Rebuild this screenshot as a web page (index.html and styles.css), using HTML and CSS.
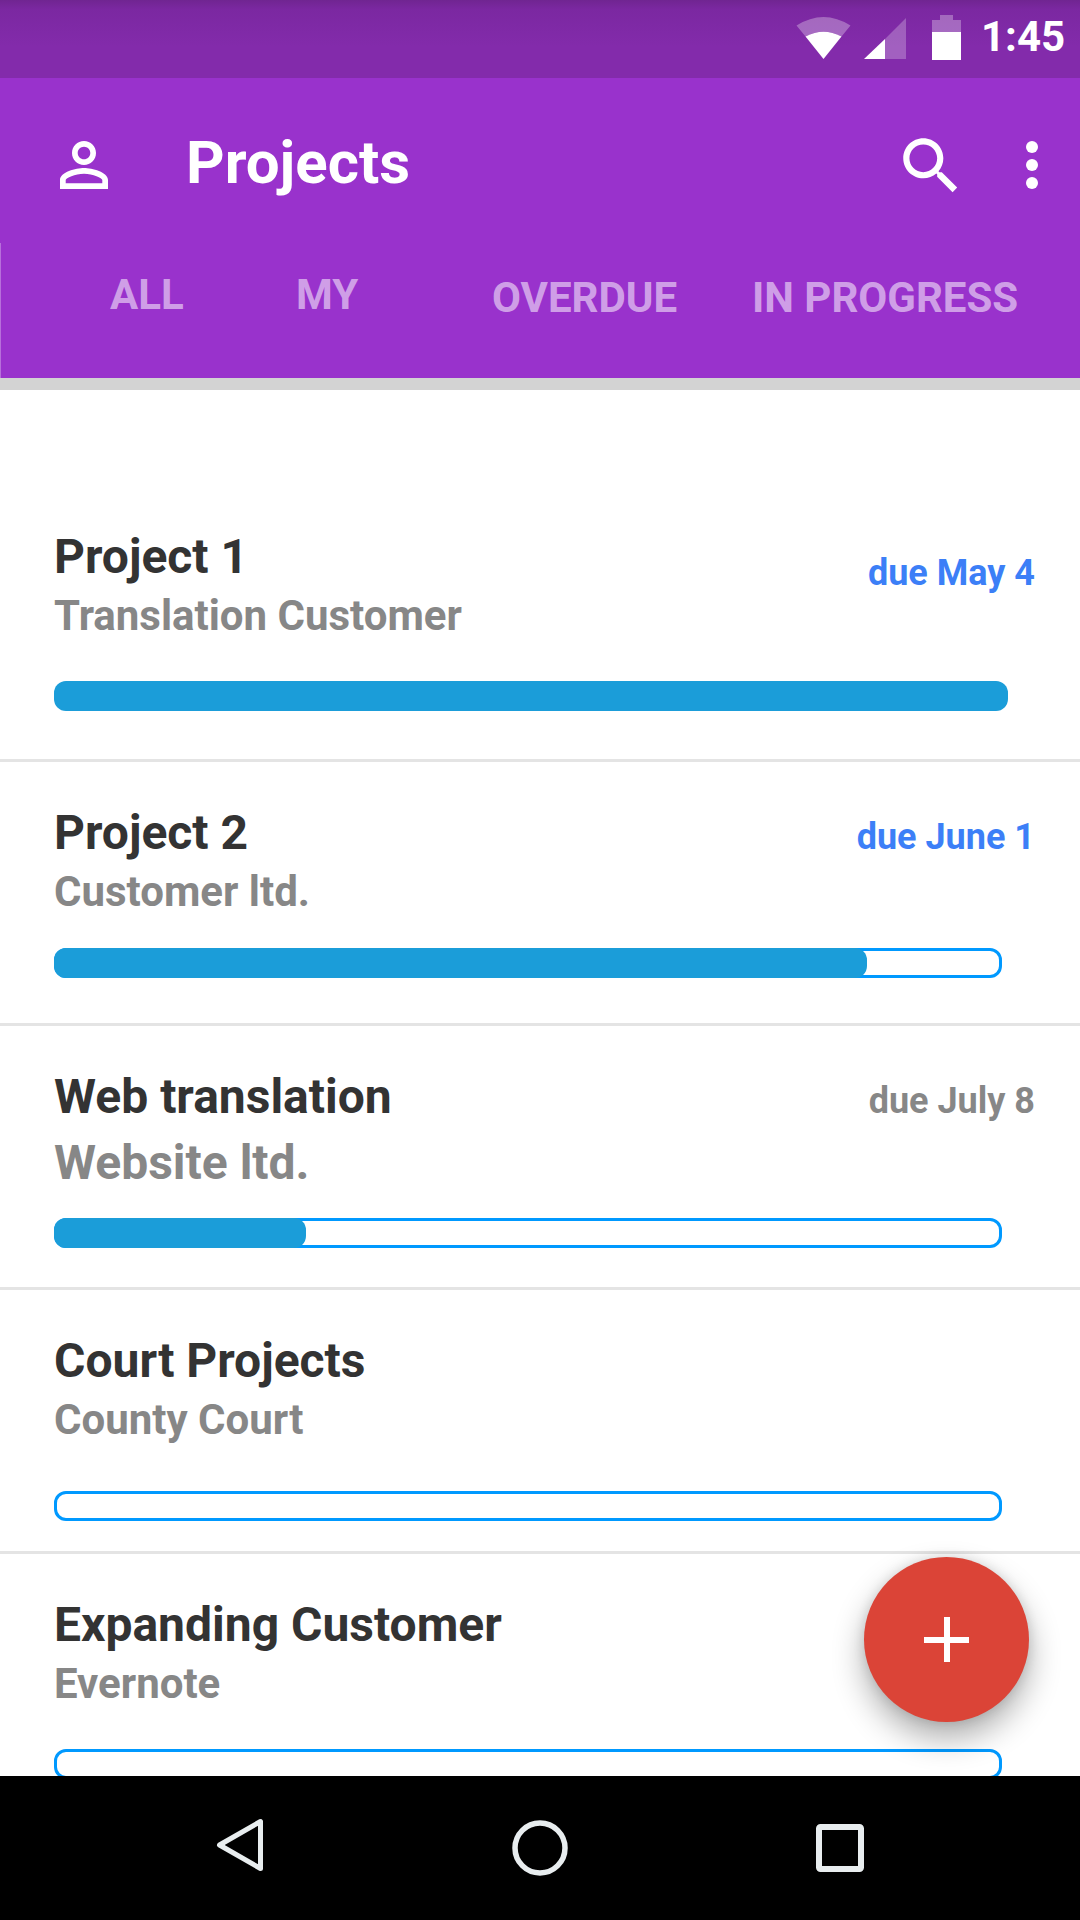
FILE: index.html
```html
<!DOCTYPE html>
<html lang="en">
<head>
<meta charset="utf-8">
<title>Projects</title>
<link rel="stylesheet" href="styles.css">
</head>
<body>
<div class="screen">
  <header class="header">
    <div class="status-bar">
      <svg class="status-icons" viewBox="0 0 180 78" width="180" height="78" fill="#fff">
        <path opacity=".3" d="M10.500 25.500Q37.500 8.500 64.500 25.500L55.500 36.500Q37.500 27 19.500 36.500Z"/>
        <path d="M19.500 36.500Q37.500 27 55.500 36.500L37.500 59Z"/>
        <path opacity=".25" d="M99 39 120 18V59H99Z"/>
        <path d="M78 59 99 39V59Z"/>
        <path opacity=".3" d="M154 15h13v5h8v12h-29V20h8z"/>
        <path d="M146 32h29v28h-29z"/>
      </svg>
      <span class="clock">1:45</span>
    </div>
    <div class="app-bar">
      <svg class="icon" viewBox="0 0 24 24"><path d="M12 5.900c1.160 0 2.100.940 2.100 2.100s-.940 2.100-2.100 2.100S9.900 9.160 9.900 8s.940-2.100 2.100-2.100m0 9c2.970 0 6.100 1.460 6.100 2.100v1.100H5.900V17c0-.640 3.130-2.100 6.100-2.100M12 4C9.790 4 8 5.790 8 8s1.790 4 4 4 4-1.790 4-4-1.790-4-4-4zm0 9c-2.670 0-8 1.340-8 4v3h16v-3c0-2.660-5.330-4-8-4z"/></svg>
      <h1 class="page-title">Projects</h1>
      <svg class="icon icon-search" viewBox="0 0 24 24"><path d="M15.500 14h-.790l-.280-.270C15.410 12.590 16 11.110 16 9.500 16 5.910 13.090 3 9.500 3S3 5.910 3 9.500 5.910 16 9.500 16c1.610 0 3.090-.590 4.230-1.570l.270.280v.790l5 4.990L20.490 19l-4.990-5zm-6 0C7.010 14 5 11.990 5 9.500S7.010 5 9.500 5 14 7.010 14 9.500 11.990 14 9.500 14z"/></svg>
      <svg class="icon icon-more" viewBox="0 0 24 24"><circle cx="12" cy="6" r="2"/><circle cx="12" cy="12" r="2"/><circle cx="12" cy="18" r="2"/></svg>
    </div>
    <nav class="tabs">
      <span class="tab tab-all">ALL</span>
      <span class="tab tab-my">MY</span>
      <span class="tab tab-overdue">OVERDUE</span>
      <span class="tab tab-progress">IN PROGRESS</span>
    </nav>
  </header>

  <main class="list">
    <article class="project project-first">
      <div class="row">
        <div class="names"><h2 class="title">Project 1</h2><p class="client">Translation Customer</p></div>
        <span class="due due-may">due May 4</span>
      </div>
      <div class="progress full"></div>
    </article>
    <article class="project project-second">
      <div class="row">
        <div class="names"><h2 class="title">Project 2</h2><p class="client">Customer ltd.</p></div>
        <span class="due due-june">due June 1</span>
      </div>
      <div class="progress"><div class="fill" style="width:813px"></div></div>
    </article>
    <article class="project project-web">
      <div class="row">
        <div class="names"><h2 class="title">Web translation</h2><p class="client client-large">Website ltd.</p></div>
        <span class="due due-later">due July 8</span>
      </div>
      <div class="progress"><div class="fill" style="width:252px"></div></div>
    </article>
    <article class="project project-court">
      <div class="row">
        <div class="names"><h2 class="title">Court Projects</h2><p class="client">County Court</p></div>
      </div>
      <div class="progress"></div>
    </article>
    <article class="project project-last">
      <div class="row">
        <div class="names"><h2 class="title">Expanding Customer</h2><p class="client">Evernote</p></div>
      </div>
      <div class="progress"></div>
    </article>
    <button class="fab" aria-label="Add project">
      <svg viewBox="0 0 45 45" width="45" height="45"><path fill="#fff" d="M20 0h6v20h19v6H26v19h-6V26H0v-6h20z"/></svg>
    </button>
  </main>

  <footer class="nav-bar">
    <svg viewBox="0 0 1080 144" width="1080" height="144" fill="none" stroke="#e8edef" stroke-width="5" stroke-linejoin="round">
      <path d="M260.500 45.500v47L219.500 69z"/>
      <circle cx="540" cy="72" r="25" stroke-width="5.500"/>
      <rect x="819" y="51" width="42" height="42" rx="1.500" stroke-width="6"/>
    </svg>
  </footer>
</div>
</body>
</html>
```
FILE: styles.css
```css
* { box-sizing: border-box; }

body {
  margin: 0;
  font-family: Roboto, "Liberation Sans", sans-serif;
  font-weight: 700;
  color: #333;
}

h1, h2, p { margin: 0; font-weight: inherit; }

.screen {
  display: flex;
  flex-direction: column;
  width: 1080px;
  height: 1920px;
  overflow: hidden;
  background: #fff;
}

.header {
  height: 390px;
  flex: none;
  background: #9932cc;
  color: #fff;
}

.status-bar {
  display: flex;
  justify-content: flex-end;
  height: 78px;
  background: linear-gradient(#702591, #7b28a1 12%, #832bab 60%, #832bab);
}

.status-icons { flex: none; }

.clock {
  width: 114px;
  padding: 12px 0 0 15px;
  font-size: 42px;
  line-height: 50px;
  white-space: nowrap;
}

.app-bar {
  display: flex;
  align-items: center;
  height: 165px;
  padding: 9px 12px 0 48px;
}

.icon { width: 72px; height: 72px; fill: #fff; flex: none; }
.page-title { flex: 1; margin: 0 0 4px 66px; font-size: 60px; line-height: 70px; }
.icon-search { width: 74px; height: 74px; margin: 2px 28px 0 0; }

.tabs {
  display: flex;
  height: 147px;
  padding: 27px 0 0 110px;
  border-bottom: 12px solid #d3d3d3;
  box-shadow: inset 1px 0 rgba(255, 255, 255, .3);
  font-size: 42px;
  line-height: 50px;
  white-space: nowrap;
}

.tab { color: rgba(255, 255, 255, .55); }
.tab-all { width: 186px; }
.tab-my { width: 196px; }
.tab-overdue { width: 260px; }
.tab-overdue, .tab-progress { padding-top: 3px; }

.list {
  position: relative;
  flex: none;
  height: 1386px;
  padding-top: 108px;
  overflow: hidden;
}

.project {
  display: flex;
  flex-direction: column;
  height: 264px;
  padding: 43px 45px 45px 54px;
  border-bottom: 3px solid #e4e4e4;
}

.project-first { padding-top: 31px; padding-bottom: 48px; }
.project-web { padding-bottom: 39px; }
.project-court { padding-bottom: 30px; }
.project-last { padding-bottom: 36px; }

.row { display: flex; justify-content: space-between; }
.title { font-size: 48px; line-height: 56px; }
.client { margin-top: 6px; font-size: 42px; line-height: 50px; color: #878787; }
.client-large { margin-top: 10px; font-size: 48px; line-height: 56px; }

.due { padding-top: 11px; font-size: 36px; line-height: 42px; color: #3c7ff7; }
.project-first .due { padding-top: 23px; }
.due-later { color: #878787; }

.progress {
  width: 948px;
  height: 30px;
  flex: none;
  margin-top: auto;
  border: 3px solid #0099ff;
  border-radius: 12px;
}

.progress.full { width: 954px; border: 0; background: #1b9dd9; }

.fill {
  height: 30px;
  margin: -3px;
  border-radius: 12px;
  background: #1b9dd9;
}

.fab {
  position: absolute;
  left: 864px;
  top: 1167px;
  display: flex;
  align-items: center;
  justify-content: center;
  width: 165px;
  height: 165px;
  padding: 0;
  border: 0;
  border-radius: 50%;
  background: #db4437;
  box-shadow: 0 16px 32px rgba(0, 0, 0, .32), 0 0 12px rgba(0, 0, 0, .12);
}

.nav-bar { height: 144px; flex: none; background: #000; }
.nav-bar svg { display: block; }
```
